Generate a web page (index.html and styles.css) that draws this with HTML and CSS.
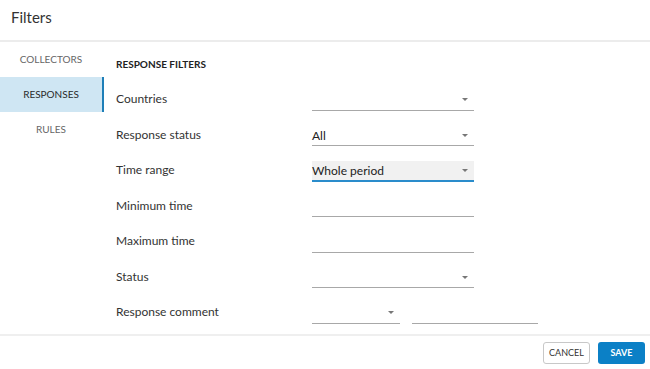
FILE: index.html
```html
<!DOCTYPE html>
<html lang="en">
<head>
    <meta charset="UTF-8">
    <meta name="viewport" content="width=device-width, initial-scale=1.0">
    <title>Filters</title>
    <link rel="stylesheet" href="styles.css">
</head>
<body>
    <div class="dialog">
        <div class="dialog-header">Filters</div>
        <div class="dialog-body">
            <div class="side-nav">
                <div class="side-item">COLLECTORS</div>
                <div class="side-item active">RESPONSES</div>
                <div class="side-item">RULES</div>
            </div>
            <div class="filters">
                <div class="filters-title">RESPONSE FILTERS</div>
                <div class="filter-row">
                    <div class="filter-label">Countries</div>
                    <div class="field select"><span class="field-value"></span><span class="arrow"></span></div>
                </div>
                <div class="filter-row">
                    <div class="filter-label">Response status</div>
                    <div class="field select"><span class="field-value">All</span><span class="arrow"></span></div>
                </div>
                <div class="filter-row">
                    <div class="filter-label">Time range</div>
                    <div class="field select focused"><span class="field-value">Whole period</span><span class="arrow"></span></div>
                </div>
                <div class="filter-row">
                    <div class="filter-label">Minimum time</div>
                    <div class="field"><span class="field-value"></span></div>
                </div>
                <div class="filter-row">
                    <div class="filter-label">Maximum time</div>
                    <div class="field"><span class="field-value"></span></div>
                </div>
                <div class="filter-row">
                    <div class="filter-label">Status</div>
                    <div class="field select"><span class="field-value"></span><span class="arrow"></span></div>
                </div>
                <div class="filter-row">
                    <div class="filter-label">Response comment</div>
                    <div class="field-pair">
                        <div class="field select small"><span class="field-value"></span><span class="arrow"></span></div>
                        <div class="field wide"><span class="field-value"></span></div>
                    </div>
                </div>
            </div>
        </div>
        <div class="dialog-footer">
            <button class="btn btn-cancel">CANCEL</button>
            <button class="btn btn-save">SAVE</button>
        </div>
    </div>
</body>
</html>
```

FILE: styles.css
```css
body {
    font-family: Lato, 'Open Sans', sans-serif;
    background-color: #fff;
    margin: 0;
    padding: 0;
    color: #333;
}
.dialog {
    width: 650px;
    height: 369px;
    display: flex;
    flex-direction: column;
}
.dialog-header {
    height: 40px;
    padding-left: 11px;
    font-size: 15px;
    line-height: 35px;
    color: #333;
    border-bottom: 2px solid #ececec;
}
.dialog-body {
    height: 292px;
    display: flex;
}
.side-nav {
    width: 104px;
}
.side-item {
    height: 35px;
    line-height: 35px;
    text-align: center;
    font-size: 10px;
    color: #666;
    padding-right: 2px;
}
.side-item.active {
    background-color: #cfe6f3;
    color: #2a2a2a;
    border-right: 2px solid #1e7fb8;
    padding-right: 0;
}
.filters {
    padding-left: 12px;
    padding-top: 16px;
}
.filters-title {
    font-size: 10px;
    font-weight: bold;
    color: #222;
    height: 23px;
    line-height: 13px;
}
.filter-row {
    display: flex;
    align-items: center;
    height: 35.5px;
}
.filter-label {
    width: 196px;
    font-size: 12px;
    color: #333;
}
.field {
    position: relative;
    width: 162px;
    height: 21px;
    margin-top: 3px;
    border-bottom: 1px solid #a8a8a8;
    box-sizing: border-box;
    display: flex;
    align-items: center;
    font-size: 12px;
    color: #222;
}
.field.focused {
    background-color: #f1f1f1;
    border-bottom: 2px solid #2a8ccb;
}
.field.small {
    width: 88px;
}
.field.wide {
    width: 126px;
}
.field-pair {
    display: flex;
    gap: 12px;
}
.field-value {
    flex: 1;
}
.arrow {
    width: 0;
    height: 0;
    margin-right: 6px;
    border-left: 3px solid transparent;
    border-right: 3px solid transparent;
    border-top: 3px solid #777;
}
.dialog-footer {
    flex: 1;
    border-top: 2px solid #efefef;
    display: flex;
    justify-content: flex-end;
    align-items: center;
    gap: 8px;
    padding-right: 5px;
}
.btn {
    font-family: Lato, 'Open Sans', sans-serif;
    height: 22px;
    width: 47px;
    font-size: 9px;
    border-radius: 3px;
    padding: 0;
    cursor: pointer;
}
.btn-cancel {
    background-color: #fff;
    border: 1px solid #c8c8c8;
    color: #333;
}
.btn-save {
    background-color: #0b80c6;
    border: none;
    color: #fff;
    font-weight: bold;
}
```
